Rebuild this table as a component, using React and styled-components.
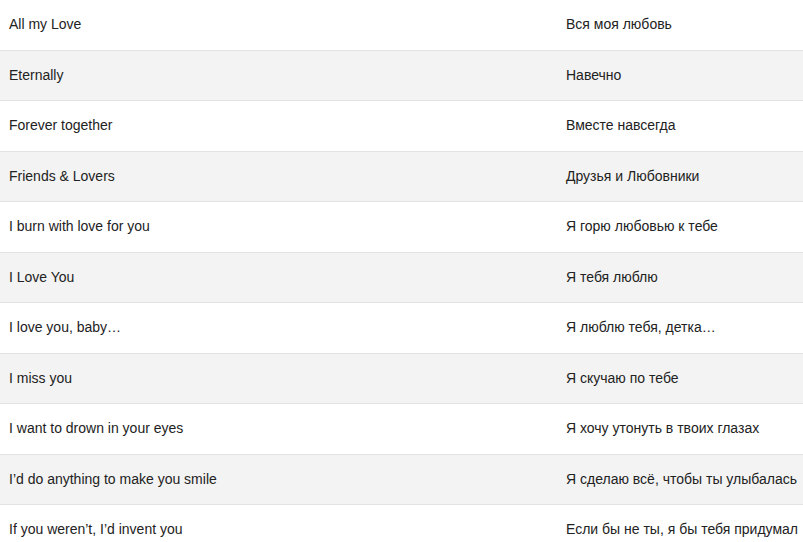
import React from "react";
import styled, { createGlobalStyle } from "styled-components";

const phrases = [
  ["All my Love", "Вся моя любовь"],
  ["Eternally", "Навечно"],
  ["Forever together", "Вместе навсегда"],
  ["Friends & Lovers", "Друзья и Любовники"],
  ["I burn with love for you", "Я горю любовью к тебе"],
  ["I Love You", "Я тебя люблю"],
  ["I love you, baby…", "Я люблю тебя, детка…"],
  ["I miss you", "Я скучаю по тебе"],
  ["I want to drown in your eyes", "Я хочу утонуть в твоих глазах"],
  ["I’d do anything to make you smile", "Я сделаю всё, чтобы ты улыбалась"],
  ["If you weren’t, I’d invent you", "Если бы не ты, я бы тебя придумал"],
];

export default function App() {
  return (
    <>
      <GlobalStyle />
      <Table>
        {phrases.map(([en, ru], i) => (
          <Row key={en} $striped={i % 2 === 1}>
            <Cell>{en}</Cell>
            <Cell>{ru}</Cell>
          </Row>
        ))}
      </Table>
    </>
  );
}

const GlobalStyle = createGlobalStyle`
  html, body {
    margin: 0;
    padding: 0;
    background: #ffffff;
    overflow: hidden;
  }
  body {
    font-family: "Liberation Sans", Arial, sans-serif;
    font-size: 14px;
    color: #222222;
  }
`;

const Table = styled.div`
  display: flex;
  flex-direction: column;
  width: 100%;
`;

const Row = styled.div`
  display: grid;
  grid-template-columns: 557px 1fr;
  align-items: center;
  box-sizing: border-box;
  height: 50.5px;
  padding-bottom: 1px;
  overflow: hidden;
  border-bottom: 1px solid #e2e2e2;
  background: ${(p) => (p.$striped ? "#f3f3f3" : "#ffffff")};
`;

const Cell = styled.div`
  padding-left: 9px;
  white-space: nowrap;
  overflow: hidden;
  line-height: 18px;
`;
